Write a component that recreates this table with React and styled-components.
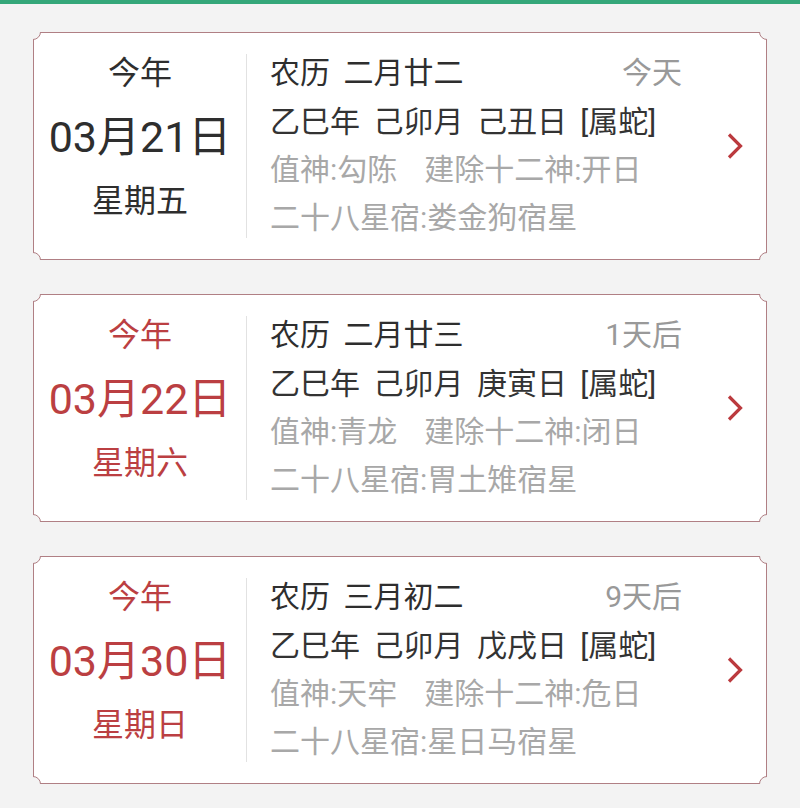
import React from 'react';
import styled, { createGlobalStyle } from 'styled-components';

const GlobalStyle = createGlobalStyle`
  html, body {
    margin: 0;
    padding: 0;
    background: #f3f3f3;
  }
  body {
    font-family: Roboto, "Noto Sans CJK SC", sans-serif;
  }
`;

const days = [
  {
    today: true,
    lunar: '农历 二月廿二',
    rel: '今天',
    date: '03月21日',
    week: '星期五',
    ganzhi: '乙巳年 己卯月 己丑日 [属蛇]',
    zhishen: '值神:勾陈',
    jianchu: '建除十二神:开日',
    xiu: '二十八星宿:娄金狗宿星',
  },
  {
    lunar: '农历 二月廿三',
    rel: '1天后',
    date: '03月22日',
    week: '星期六',
    ganzhi: '乙巳年 己卯月 庚寅日 [属蛇]',
    zhishen: '值神:青龙',
    jianchu: '建除十二神:闭日',
    xiu: '二十八星宿:胃土雉宿星',
  },
  {
    lunar: '农历 三月初二',
    rel: '9天后',
    date: '03月30日',
    week: '星期日',
    ganzhi: '乙巳年 己卯月 戊戌日 [属蛇]',
    zhishen: '值神:天牢',
    jianchu: '建除十二神:危日',
    xiu: '二十八星宿:星日马宿星',
  },
];

const App = () => {
  return (
    <>
      <GlobalStyle />
      <TopBar />
      <List>
        {days.map((d) => (
          <CardWrap key={d.date}>
            <Card>
              <DateCol>
                <Year red={!d.today}>今年</Year>
                <BigDate red={!d.today}>{d.date}</BigDate>
                <Week red={!d.today}>{d.week}</Week>
              </DateCol>
              <Divider />
              <Info>
                <LunarRow>
                  <Lunar>{d.lunar}</Lunar>
                  <Rel>{d.rel}</Rel>
                </LunarRow>
                <Ganzhi>{d.ganzhi}</Ganzhi>
                <GrayRow>
                  <span>{d.zhishen}</span>
                  <span>{d.jianchu}</span>
                </GrayRow>
                <GrayRow>{d.xiu}</GrayRow>
              </Info>
              <Arrow>
                <svg width="16" height="26" viewBox="0 0 16 26">
                  <polyline points="2,1.5 13.5,13 2,24.5" fill="none" stroke="#bb3a3e" strokeWidth="3.2" />
                </svg>
              </Arrow>
            </Card>
            <Corner v="top" h="left" />
            <Corner v="top" h="right" />
            <Corner v="bottom" h="left" />
            <Corner v="bottom" h="right" />
          </CardWrap>
        ))}
      </List>
    </>
  );
};

const TopBar = styled.div`
  height: 4px;
  background: #34a779;
`;

const List = styled.div`
  display: flex;
  flex-direction: column;
  gap: 34px;
  padding: 28px 33px 0;
`;

const CardWrap = styled.div`
  position: relative;
  overflow: hidden;
  height: 228px;
`;

const Card = styled.div`
  box-sizing: border-box;
  height: 100%;
  display: flex;
  align-items: stretch;
  background: #fff;
  border: 1.5px solid #b07f84;
`;

const Corner = styled.div`
  position: absolute;
  box-sizing: border-box;
  width: 16px;
  height: 16px;
  border-radius: 50%;
  background: #f3f3f3;
  border: 1.5px solid #b07f84;
  ${({ v }) => v}: -8px;
  ${({ h }) => h}: -8px;
`;

const DateCol = styled.div`
  width: 212px;
  display: flex;
  flex-direction: column;
  align-items: center;
  padding-top: 8px;
  color: #2e2e2e;
`;

const Year = styled.div`
  font-size: 32px;
  line-height: 64px;
  color: ${({ red }) => (red ? '#bb3f42' : '#2e2e2e')};
`;

const BigDate = styled.div`
  font-size: 43px;
  line-height: 64px;
  color: ${({ red }) => (red ? '#bb3f42' : '#2e2e2e')};
`;

const Week = styled(Year)``;

const Divider = styled.div`
  width: 1px;
  margin: 21px 0;
  background: #e2e2e2;
`;

const Info = styled.div`
  flex: 1;
  padding: 15px 0 0 23px;
  display: flex;
  flex-direction: column;
`;

const LunarRow = styled.div`
  display: flex;
  justify-content: space-between;
  font-size: 30px;
  line-height: 49px;
`;

const Lunar = styled.span`
  color: #2e2e2e;
  word-spacing: 6px;
`;

const Rel = styled.span`
  color: #999;
`;

const Ganzhi = styled.div`
  font-size: 30px;
  line-height: 49px;
  color: #333;
  word-spacing: 6px;
`;

const GrayRow = styled.div`
  display: flex;
  gap: 27px;
  font-size: 30px;
  line-height: 48px;
  color: #a8a8a8;
`;

const Arrow = styled.div`
  width: 84px;
  display: flex;
  align-items: center;
  justify-content: center;
  padding-left: 22px;
  box-sizing: border-box;
`;

export default App;
